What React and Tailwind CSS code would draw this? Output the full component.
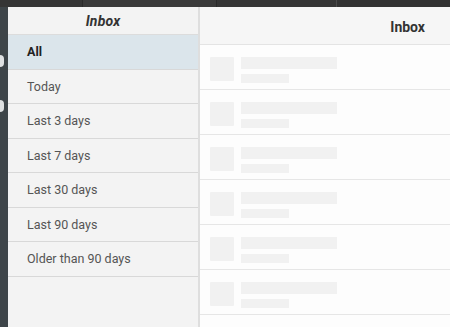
import React from "react";

const items = ["All", "Today", "Last 3 days", "Last 7 days", "Last 30 days", "Last 90 days", "Older than 90 days"];

function Row() {
  return (
    <div className="h-[45px] border-b border-[#e6e6e6] bg-[#fdfdfd] flex items-start pt-[12px] pl-[10px] gap-[7px]">
      <div className="w-[24px] h-[24px] bg-[#f1f1f1] rounded-[1px]" />
      <div className="flex flex-col gap-[5px]">
        <div className="w-[96px] h-[12px] bg-[#f1f1f1]" />
        <div className="w-[48px] h-[9px] bg-[#f1f1f1]" />
      </div>
    </div>
  );
}

export default function App() {
  return (
    <div className="w-[450px] h-[327px] overflow-hidden bg-[#3b3b3b] flex flex-col" style={{ fontFamily: "Roboto, 'Liberation Sans', sans-serif" }}>
      <div className="h-[7px] shrink-0 flex bg-[#353535]">
        <div className="w-[83px] border-r border-[#2a2a2a]" />
        <div className="w-[134px] border-r border-[#2a2a2a] bg-[#3a3a3a]" />
        <div className="w-[120px] border-r border-[#4a4a4a]" />
        <div className="flex-1 bg-[#323232]" />
      </div>
      <div className="flex flex-1 min-h-0">
        <div className="w-[8px] shrink-0 bg-[#3e4549] flex flex-col">
          <div className="h-[48px]" />
          <div className="w-[4px] h-[12px] bg-[#dfe1e2] rounded-r-full" />
          <div className="h-[33px]" />
          <div className="w-[4px] h-[12px] bg-[#dfe1e2] rounded-r-full" />
        </div>
        <div className="w-[192px] shrink-0 bg-[#f3f3f3] border-r-2 border-[#dedede] flex flex-col">
          <div className="h-[28px] border-b border-[#dcdcdc] flex items-center justify-center pt-[2px]">
            <span className="text-[14px] font-bold italic text-[#333] tracking-[0.2px]">Inbox</span>
          </div>
          {items.map((t, i) => (
            <div
              key={t}
              className={
                i === 0
                  ? "h-[34.5px] border-b border-[#d8d8d8] bg-[#dbe5eb] flex items-center pl-[19px] pt-[2px] text-[12.5px] font-bold text-[#222]"
                  : "h-[34.5px] border-b border-[#d8d8d8] flex items-center pl-[19px] pt-[2px] text-[12.5px] text-[#555]"
              }
            >
              {t}
            </div>
          ))}
        </div>
        <div className="flex-1 flex flex-col bg-[#fdfdfd]">
          <div className="h-[38px] shrink-0 bg-[#f6f6f6] border-b border-[#e4e4e4] flex items-center justify-end pr-[25px] pt-[3px]">
            <span className="text-[14px] font-bold text-[#333]">Inbox</span>
          </div>
          {[0, 1, 2, 3, 4, 5].map((i) => (
            <Row key={i} />
          ))}
        </div>
      </div>
    </div>
  );
}
